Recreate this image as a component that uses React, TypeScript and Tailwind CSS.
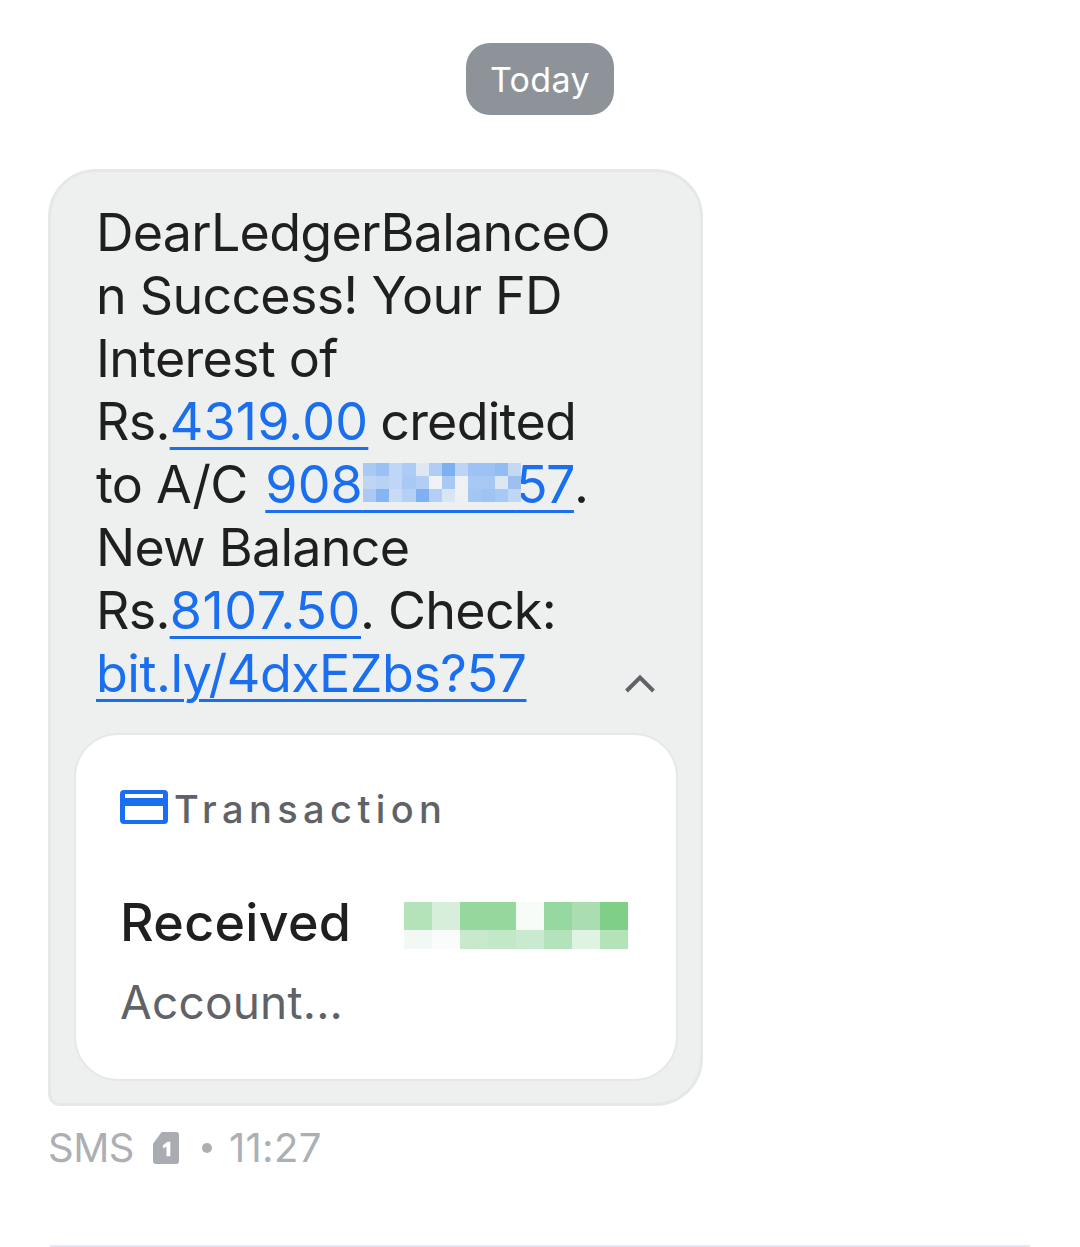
import React from "react";

const blueCells = [
  "bg-[#a9c9f5]", "bg-[#9bc1f4]", "bg-[#c0d6f6]", "bg-[#aecbf5]", "bg-[#dfe7f2]", "bg-[#b0cdf5]", "bg-[#7db0f3]", "bg-[#bcd5f6]", "bg-[#9dc3f4]", "bg-[#9dc3f4]", "bg-[#92bcf4]", "bg-[#c2d8f5]",
  "bg-[#c0d5f4]", "bg-[#b8d2f5]", "bg-[#c0d6f6]", "bg-[#a9c9f5]", "bg-[#b3cef4]", "bg-[#eff3f6]", "bg-[#a9c9f5]", "bg-[#eef1f3]", "bg-[#a8c9f5]", "bg-[#a8c8f4]", "bg-[#dde7f3]", "bg-[#9dc0ee]",
  "bg-[#acc9f3]", "bg-[#86b5f3]", "bg-[#c8dbf6]", "bg-[#b5cff5]", "bg-[#7eb0f2]", "bg-[#b4cff5]", "bg-[#d9e5f4]", "bg-[#eef0f1]", "bg-[#a3c6f5]", "bg-[#9fc3f4]", "bg-[#a8c8f5]", "bg-[#c0d6f5]",
];

const greenCells = [
  "bg-[#b4e2b9]", "bg-[#d6eeda]", "bg-[#95d79d]", "bg-[#95d79d]", "bg-[#f7fbf7]", "bg-[#97d8a0]", "bg-[#aadeb1]", "bg-[#7fcf86]",
  "bg-[#f2f8f3]", "bg-[#f9fcfa]", "bg-[#c8e9cc]", "bg-[#c3e8c8]", "bg-[#c9ead0]", "bg-[#b4e2bb]", "bg-[#dff3e2]", "bg-[#b4e3ba]",
];

const linkStyle = "text-[#1a6ef0] underline decoration-[3px] underline-offset-[7px]";

const App = () => {
  return (
    <div className="w-[1080px] h-[1247px] overflow-hidden bg-white flex flex-col font-['Inter',sans-serif]">
      <div className="flex justify-center pt-[43px]">
        <div className="w-[148px] h-[72px] rounded-[24px] bg-[#8e939a] text-white text-[34px] tracking-[0.4px] flex items-center justify-center">
          Today
        </div>
      </div>

      <div className="ml-[48px] mt-[54px] w-[655px] h-[937px] bg-[#eef0ef] border-[3px] border-[#e6e8e8] rounded-[48px] rounded-bl-[12px] flex flex-col">
        <div className="flex items-end justify-between pl-[45px] pr-[44px] pt-[29px]">
          <div className="text-[52px] leading-[63px] tracking-[-0.75px] text-[#1f1f1f] whitespace-nowrap">
            DearLedgerBalanceO
            <br />
            n Success! Your FD
            <br />
            Interest of
            <br />
            Rs.<span className={`${linkStyle} tracking-[0.23px]`}>4319.00</span>
            <span className="ml-[-2px]"> credited</span>
            <br />
            to A/C{" "}
            <span className={`${linkStyle} ml-[4px] tracking-[0.1px]`}>
              908
              <span className="relative tracking-[-2.2px]">
                <span className="text-transparent">00000</span>
                <span className="absolute left-0 top-[10px] w-[158px] grid grid-cols-12 auto-rows-[13px]">
                  {blueCells.map((c, i) => (
                    <span key={i} className={c} />
                  ))}
                </span>
              </span>
              <span className="tracking-[-1.5px]">57</span>
            </span>
            .
            <br />
            New Balance
            <br />
            Rs.<span className={`${linkStyle} tracking-[0.66px]`}>8107.50</span>
            <span className="ml-[-1px]">. Check:</span>
            <br />
            <span className={`${linkStyle} tracking-[-0.5px]`}>bit.ly/4dxEZbs?57</span>
          </div>
          <svg width="32" height="20" viewBox="0 0 32 20" fill="none" className="mb-[12px]">
            <path d="M2.5 18 16 4.5 29.5 18" stroke="#5f6368" strokeWidth="4" />
          </svg>
        </div>

        <div className="ml-[23px] mt-[28px] w-[604px] h-[348px] bg-white border-2 border-[#e6e8e8] rounded-[44px] pl-[44px] pr-[48px] pt-[51px] flex flex-col">
          <div className="flex items-center gap-[6px]">
            <svg width="48" height="34" viewBox="0 0 48 34" fill="none" className="mb-[4px]">
              <rect width="48" height="34" rx="4" fill="#1a6ef0" />
              <rect x="5" y="4" width="38" height="4" fill="#fff" />
              <rect x="5" y="16" width="38" height="14" fill="#fff" />
            </svg>
            <span className="text-[38px] leading-[46px] tracking-[5.4px] font-medium text-[#5f6368]">Transaction</span>
          </div>
          <div className="flex items-start justify-between mt-[59px]">
            <span className="text-[52px] leading-[64px] font-medium tracking-[0.3px] text-[#1f1f1f]">Received</span>
            <div className="mt-[11px] w-[224px] grid grid-cols-8 grid-rows-[28px_19px]">
              {greenCells.map((c, i) => (
                <div key={i} className={c} />
              ))}
            </div>
          </div>
          <div className="mt-[19px] text-[46px] leading-[56px] tracking-[0.2px] text-[#5f6368]">Account...</div>
        </div>
      </div>

      <div className="ml-[48px] mt-[17px] flex items-center text-[#acafb4] text-[40px] leading-[50px] tracking-[-0.5px]">
        <span>SMS</span>
        <svg width="26" height="32" viewBox="0 0 27 33" className="ml-[19px]">
          <path d="M9 0h15a3 3 0 0 1 3 3v27a3 3 0 0 1-3 3H3a3 3 0 0 1-3-3V12z" fill="#a9acb1" />
          <path d="M10 14l5-4h3v15h-4V15l-3 2z" fill="#fff" />
        </svg>
        <span className="ml-[23px] w-[10px] h-[10px] rounded-full bg-[#acafb4]" />
        <span className="ml-[17px] tracking-[0.3px]">11:27</span>
      </div>

      <div className="flex-1" />
      <div className="ml-[50px] w-[980px] h-[2px] bg-[#e3e8f6]" />
    </div>
  );
};

export default App;
